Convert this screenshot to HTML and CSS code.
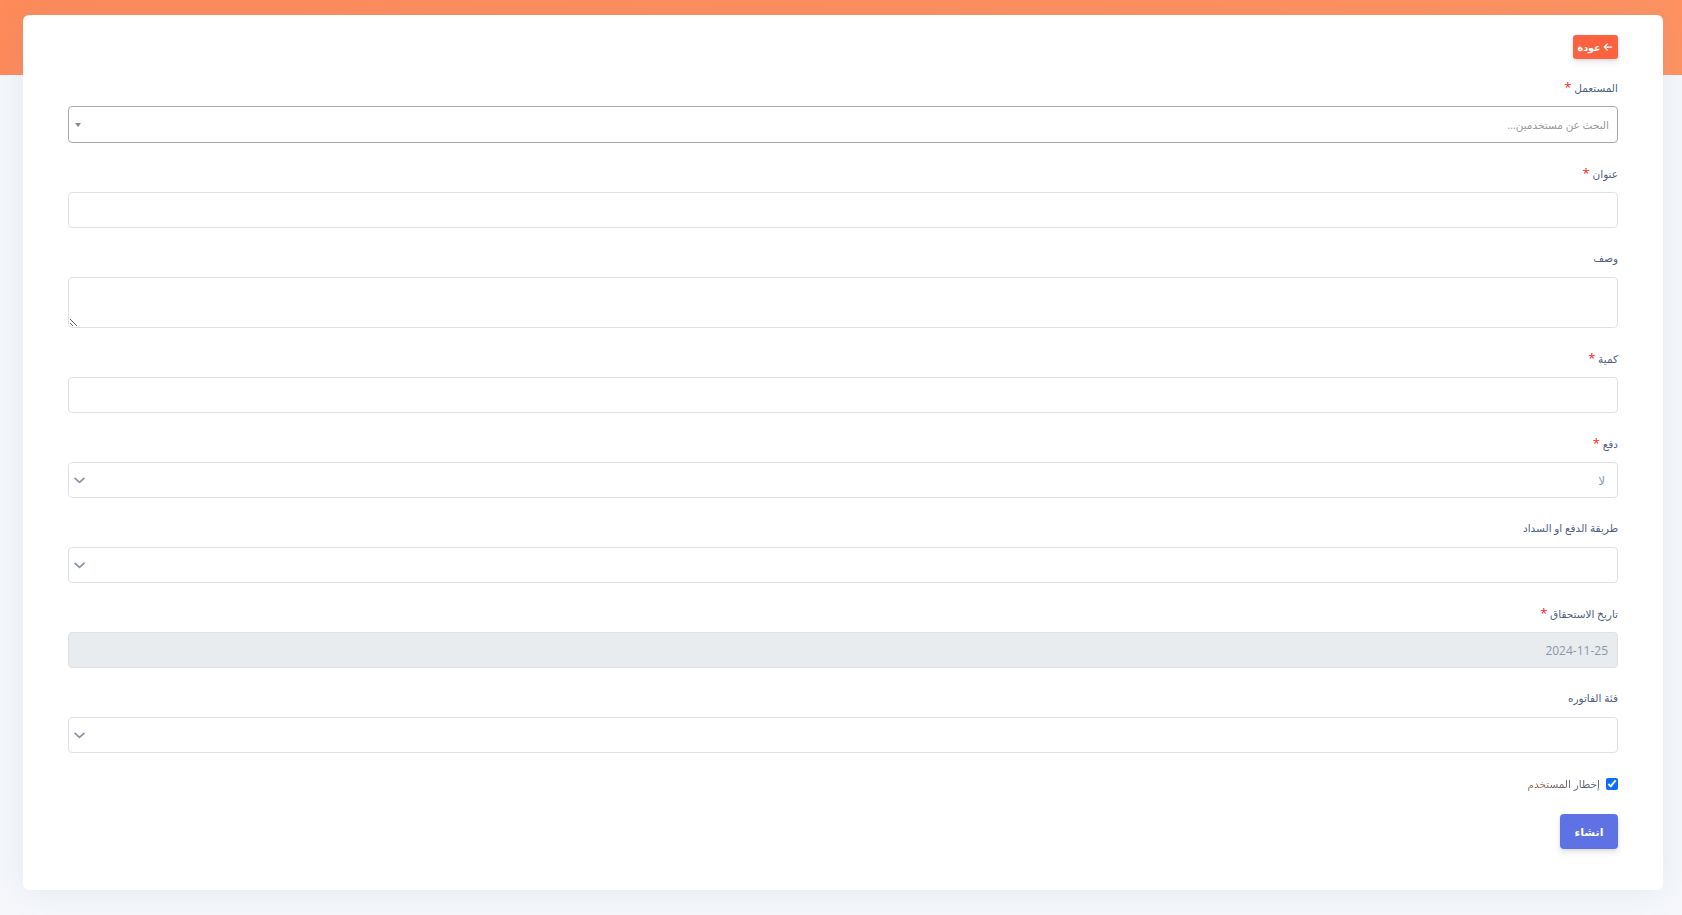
FILE: index.html
```html
<!DOCTYPE html>
<html lang="ar" dir="rtl">
<head>
  <meta charset="UTF-8" />
  <meta name="viewport" content="width=device-width, initial-scale=1.0"/>
  <title>إنشاء فاتورة</title>
  <link rel="stylesheet" href="styles.css">
</head>
<body>
  <div class="header-band"></div>

  <div class="card">
    <div class="top-row">
      <button type="button" class="btn-back">
        <svg class="back-icon" viewBox="0 0 448 512" width="10" height="10" aria-hidden="true">
          <path fill="currentColor" d="M9.4 233.4c-12.5 12.5-12.5 32.8 0 45.3l160 160c12.5 12.5 32.8 12.5 45.3 0s12.5-32.8 0-45.3L109.2 288H416c17.7 0 32-14.3 32-32s-14.3-32-32-32H109.3L214.6 118.6c12.5-12.5 12.5-32.8 0-45.3s-32.8-12.5-45.3 0l-160 160z"/>
        </svg>
        <span>عودة</span>
      </button>
    </div>

    <form class="invoice-form">
      <div class="form-group">
        <label class="form-label">المستعمل <span class="req">*</span></label>
        <div class="select2-box">
          <span class="select2-placeholder">البحث عن مستخدمين...</span>
          <span class="select2-arrow"></span>
        </div>
      </div>

      <div class="form-group">
        <label class="form-label">عنوان <span class="req">*</span></label>
        <input type="text" class="form-control" />
      </div>

      <div class="form-group">
        <label class="form-label">وصف</label>
        <textarea class="form-control textarea"></textarea>
      </div>

      <div class="form-group">
        <label class="form-label">كمية <span class="req">*</span></label>
        <input type="text" class="form-control" />
      </div>

      <div class="form-group">
        <label class="form-label">دفع <span class="req">*</span></label>
        <div class="select-box">
          <span class="select-value">لا</span>
          <svg class="chevron" viewBox="0 0 12 7" width="11" height="7" aria-hidden="true">
            <path d="M1.2 1.2l4.8 4.3 4.8-4.3" fill="none" stroke="currentColor" stroke-width="2" stroke-linecap="round" stroke-linejoin="round"/>
          </svg>
        </div>
      </div>

      <div class="form-group">
        <label class="form-label">طريقة الدفع او السداد</label>
        <div class="select-box">
          <span class="select-value"></span>
          <svg class="chevron" viewBox="0 0 12 7" width="11" height="7" aria-hidden="true">
            <path d="M1.2 1.2l4.8 4.3 4.8-4.3" fill="none" stroke="currentColor" stroke-width="2" stroke-linecap="round" stroke-linejoin="round"/>
          </svg>
        </div>
      </div>

      <div class="form-group">
        <label class="form-label">تاريخ الاستحقاق <span class="req">*</span></label>
        <div class="form-control disabled">2024-11-25</div>
      </div>

      <div class="form-group">
        <label class="form-label">فئة الفاتوره</label>
        <div class="select-box">
          <span class="select-value"></span>
          <svg class="chevron" viewBox="0 0 12 7" width="11" height="7" aria-hidden="true">
            <path d="M1.2 1.2l4.8 4.3 4.8-4.3" fill="none" stroke="currentColor" stroke-width="2" stroke-linecap="round" stroke-linejoin="round"/>
          </svg>
        </div>
      </div>

      <div class="check-row">
        <input type="checkbox" id="notify" class="check" checked />
        <label for="notify" class="check-label">إخطار المستخدم</label>
      </div>

      <div class="submit-row">
        <button type="button" class="btn-submit">انشاء</button>
      </div>
    </form>
  </div>
</body>
</html>
```

FILE: styles.css
```css
* {
  box-sizing: border-box;
}

body {
  margin: 0;
  background: #f5f7fb;
  font-family: 'Open Sans', 'DejaVu Sans', sans-serif;
  color: #525f7f;
}

.header-band {
  height: 75px;
  background: linear-gradient(87deg, #ff8a5a 0, #ff9160 100%);
}

.card {
  margin: -60px 19px 25px 23px;
  background: #fff;
  border-radius: 6px;
  padding: 20px 45px 41px;
  box-shadow: 0 0 32px rgba(136, 152, 170, 0.15);
}

.top-row {
  display: flex;
  margin-bottom: 20px;
}

.btn-back {
  display: flex;
  align-items: center;
  justify-content: center;
  gap: 3px;
  width: 45px;
  height: 24px;
  margin-left: -1px;
  padding: 0;
  border: none;
  border-radius: 3px;
  background: #fb6340;
  color: #fff;
  font-family: inherit;
  font-size: 9.5px;
  font-weight: 700;
  box-shadow: 0 3px 6px rgba(50, 50, 93, 0.12), 0 1px 3px rgba(0, 0, 0, 0.08);
}

.back-icon {
  display: block;
}

.form-group {
  margin-bottom: 22px;
}

.form-label {
  display: block;
  height: 16px;
  line-height: 16px;
  margin-bottom: 11px;
  font-size: 10.5px;
  color: #525f7f;
}

.req {
  color: #ff1a1a;
  font-size: 13px;
}

.form-control {
  display: block;
  width: 100%;
  height: 36px;
  border: 1px solid #dee2e6;
  border-radius: 4px;
  background: #fff;
  padding: 0 9px;
  font-family: inherit;
  font-size: 12px;
  color: #8898aa;
  outline: none;
}

.textarea {
  height: 51px;
  resize: vertical;
}

.disabled {
  display: flex;
  align-items: center;
  background: #e9ecef;
  color: #8898aa;
}

.select2-box {
  display: flex;
  align-items: center;
  justify-content: space-between;
  height: 37px;
  border: 1px solid #aaa;
  border-radius: 4px;
  padding: 0 8px 0 6px;
}

.select2-placeholder {
  font-size: 10.5px;
  color: #999;
}

.select2-arrow {
  width: 0;
  height: 0;
  border-left: 3px solid transparent;
  border-right: 3px solid transparent;
  border-top: 4px solid #888;
}

.select-box {
  display: flex;
  align-items: center;
  justify-content: space-between;
  height: 36px;
  border: 1px solid #dee2e6;
  border-radius: 4px;
  padding: 0 12px 0 5px;
}

.select-value {
  font-size: 12px;
  color: #8898aa;
}

.chevron {
  display: block;
  color: #8898aa;
}

.check-row {
  display: flex;
  align-items: center;
  gap: 6px;
  height: 16px;
  margin-top: 23px;
}

.check {
  width: 12px;
  height: 12px;
  margin: 0;
  accent-color: #0d6efd;
}

.check-label {
  font-size: 10.5px;
  line-height: 16px;
  background: linear-gradient(270deg, #525f7f 0, #6a6470 45%, #b0704a 100%);
  -webkit-background-clip: text;
  background-clip: text;
  color: transparent;
}

.submit-row {
  display: flex;
  margin-top: 22px;
}

.btn-submit {
  width: 58px;
  height: 35px;
  margin-left: -1px;
  border: none;
  border-radius: 4px;
  background: #5e72e4;
  color: #fff;
  font-family: inherit;
  font-size: 11px;
  font-weight: 700;
  box-shadow: 0 4px 6px rgba(50, 50, 93, 0.11), 0 1px 3px rgba(0, 0, 0, 0.08);
}
```
